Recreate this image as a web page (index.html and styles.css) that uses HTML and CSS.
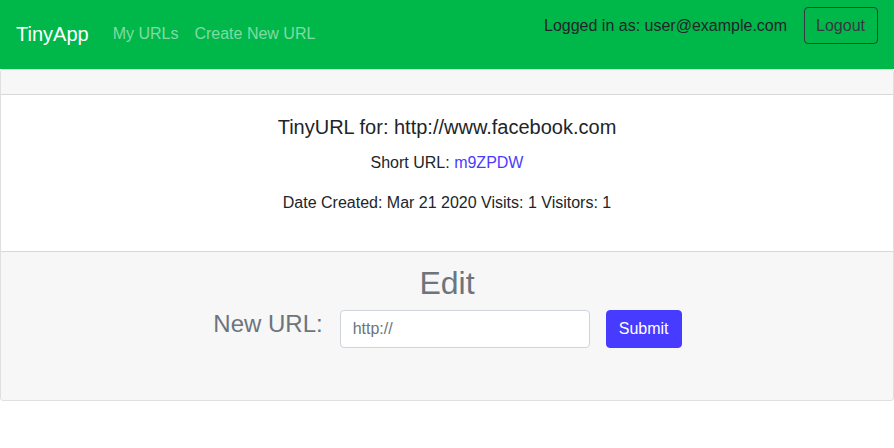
FILE: index.html
```html
<!DOCTYPE html>
<html>
<head>
<meta charset="utf-8">
<link rel="stylesheet" href="styles.css">
</head>
<body>
<nav class="navbar">
  <div class="nav-left">
    <a class="brand" href="#">TinyApp</a>
    <a class="nav-link" href="#">My URLs</a>
    <a class="nav-link" href="#">Create New URL</a>
  </div>
  <div class="nav-right">
    <span class="user">Logged in as: user@example.com</span>
    <button class="btn-logout">Logout</button>
  </div>
</nav>
<div class="card">
  <div class="card-header"></div>
  <div class="card-body">
    <h5 class="title">TinyURL for: http://www.facebook.com</h5>
    <p class="line">Short URL: <a class="short" href="#">m9ZPDW</a></p>
    <p class="line">Date Created: Mar 21 2020 Visits: 1 Visitors: 1</p>
  </div>
  <div class="card-footer">
    <h2 class="edit">Edit</h2>
    <form class="edit-form">
      <label class="label">New URL:</label>
      <input class="url-input" type="text" placeholder="http://">
      <button class="btn-submit" type="button">Submit</button>
    </form>
  </div>
</div>
</body>
</html>
```
FILE: styles.css
```css
* { box-sizing: border-box; }
body {
  margin: 0;
  font-family: "Liberation Sans", Arial, sans-serif;
  font-size: 16px;
  line-height: 1.5;
  color: #212529;
  background: #fff;
}
.navbar {
  height: 69px;
  background: #00b74a;
  display: flex;
  justify-content: space-between;
  align-items: flex-start;
  padding: 0 16px;
}
.nav-left {
  display: flex;
  align-items: center;
  padding-top: 19px;
}
.brand {
  color: #fff;
  font-size: 20px;
  line-height: 30px;
  text-decoration: none;
  margin-right: 16px;
}
.nav-link {
  color: rgba(255,255,255,0.5);
  text-decoration: none;
  padding: 0 8px;
  line-height: 24px;
}
.nav-right {
  display: flex;
  align-items: center;
  padding-top: 7px;
}
.user {
  margin-right: 17px;
  line-height: 24px;
}
.btn-logout {
  font-family: inherit;
  font-size: 16px;
  line-height: 24px;
  color: #343a40;
  background: transparent;
  border: 1px solid #343a40;
  border-radius: 4px;
  padding: 6px 12px 6px 11px;
  height: 37px;
}
.card {
  border: 1px solid rgba(0,0,0,0.125);
  border-radius: 4px;
  background: #fff;
}
.card-header {
  height: 25px;
  background: #f7f7f7;
  border-bottom: 1px solid rgba(0,0,0,0.125);
  border-radius: 3px 3px 0 0;
}
.card-body {
  padding: 20px;
  text-align: center;
}
.title {
  margin: 0 0 12px;
  font-size: 20px;
  font-weight: 500;
  line-height: 24px;
}
.line {
  margin: 0 0 16px;
  line-height: 24px;
}
.short {
  color: #4b3bff;
  text-decoration: none;
}
.card-footer {
  background: #f7f7f7;
  border-top: 1px solid rgba(0,0,0,0.125);
  border-radius: 0 0 3px 3px;
  padding: 12px 20px 52px;
  text-align: center;
  color: #6c757d;
}
.edit {
  margin: 0 0 8px;
  font-size: 32px;
  font-weight: 500;
  line-height: 38px;
}
.edit-form {
  display: flex;
  justify-content: center;
  align-items: flex-start;
  margin: 0;
  padding-left: 1px;
}
.label {
  font-size: 24px;
  line-height: 28px;
  margin-right: 17px;
}
.url-input {
  width: 250px;
  height: 38px;
  font-family: inherit;
  font-size: 16px;
  padding: 6px 12px;
  border: 1px solid #ced4da;
  border-radius: 4px;
  background: #fff;
  color: #495057;
  margin-right: 16px;
}
.url-input::placeholder { color: #6c757d; }
.btn-submit {
  font-family: inherit;
  font-size: 16px;
  line-height: 24px;
  height: 38px;
  width: 76px;
  padding: 6px 0;
  color: #fff;
  background: #473bff;
  border: 1px solid #473bff;
  border-radius: 4px;
}
```
